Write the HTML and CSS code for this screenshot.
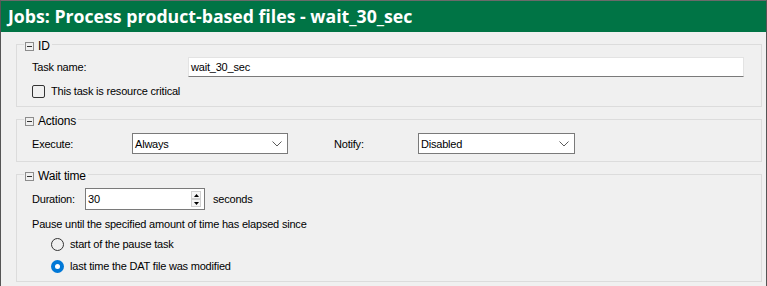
FILE: index.html
```html
<!DOCTYPE html>
<html>
    <head>
        <link rel="stylesheet" href="styles.css">
    </head>
    <body>
        <div class="window">
            <div class="titlebar">Jobs: Process product-based files - wait_30_sec</div>

            <div class="content">
                <div class="group">
                    <div class="group-title"><span class="collapse"></span>ID</div>
                    <div class="row row-input">
                        <span class="label label-task">Task name:</span>
                        <div class="textbox">wait_30_sec</div>
                    </div>
                    <div class="row row-check">
                        <span class="checkbox"></span>
                        <span>This task is resource critical</span>
                    </div>
                </div>

                <div class="group">
                    <div class="group-title"><span class="collapse"></span>Actions</div>
                    <div class="row row-combo">
                        <span class="label label-execute">Execute:</span>
                        <div class="combo combo-execute">
                            <span>Always</span>
                            <svg class="chevron" width="10" height="6" viewBox="0 0 10 6"><path d="M0.5 0.5 L5 5 L9.5 0.5" fill="none" stroke="#5a5a5a" stroke-width="1"/></svg>
                        </div>
                        <span class="label label-notify">Notify:</span>
                        <div class="combo combo-notify">
                            <span>Disabled</span>
                            <svg class="chevron" width="10" height="6" viewBox="0 0 10 6"><path d="M0.5 0.5 L5 5 L9.5 0.5" fill="none" stroke="#5a5a5a" stroke-width="1"/></svg>
                        </div>
                    </div>
                </div>

                <div class="group">
                    <div class="group-title"><span class="collapse"></span>Wait time</div>
                    <div class="row row-spin">
                        <span class="label label-duration">Duration:</span>
                        <div class="spinner">
                            <span class="spin-value">30</span>
                            <div class="spin-buttons">
                                <span class="spin-btn"><svg width="5" height="3" viewBox="0 0 5 3"><path d="M2.5 0 L5 3 L0 3 Z" fill="#000"/></svg></span>
                                <span class="spin-btn"><svg width="5" height="3" viewBox="0 0 5 3"><path d="M0 0 L5 0 L2.5 3 Z" fill="#000"/></svg></span>
                            </div>
                        </div>
                        <span class="unit">seconds</span>
                    </div>
                    <div class="row row-text">Pause until the specified amount of time has elapsed since</div>
                    <div class="row row-radio">
                        <span class="radio"></span>
                        <span>start of the pause task</span>
                    </div>
                    <div class="row row-radio row-radio-last">
                        <span class="radio checked"></span>
                        <span>last time the DAT file was modified</span>
                    </div>
                </div>
            </div>
        </div>
    </body>
</html>
```

FILE: styles.css
```css
body {
    margin: 0;
    background: #f0f0f0;
    font-family: 'Liberation Sans', Arial, sans-serif;
    font-size: 11px;
    letter-spacing: -0.2px;
    color: #000;
}

.window {
    width: 765px;
    height: 285px;
    border-top: 1px solid #6a6a6a;
    border-left: 1px solid #555;
    border-right: 1px solid #555;
    background: #f0f0f0;
    overflow: hidden;
}

.titlebar {
    height: 31px;
    background: #007445;
    color: #fff;
    font-family: 'Open Sans', sans-serif;
    font-weight: 700;
    font-size: 17.7px;
    letter-spacing: 0;
    line-height: 30px;
    padding-left: 7px;
}

.content {
    padding: 12px 4px 0 15px;
}

.group {
    border: 1px solid #dcdcdc;
    margin-bottom: 12px;
    padding-bottom: 7px;
}

.group-title {
    display: flex;
    align-items: center;
    width: fit-content;
    margin: -7px 0 0 7px;
    padding: 0 2px 0 1px;
    height: 15px;
    background: #f0f0f0;
    font-size: 12px;
}

.collapse {
    width: 7px;
    height: 7px;
    border: 1px solid #8c8c8c;
    margin-right: 4px;
    margin-top: 1px;
    display: flex;
    align-items: center;
    justify-content: center;
}

.collapse::after {
    content: "";
    width: 5px;
    height: 1px;
    background: #333;
}

.row {
    display: flex;
    align-items: center;
    padding-left: 15px;
}

.label {
    flex: none;
}

.row-input {
    margin-top: 4px;
    height: 20px;
    padding-right: 17px;
}

.label-task {
    width: 156px;
}

.textbox {
    flex: 1;
    height: 18px;
    line-height: 18px;
    background: #fff;
    border: 1px solid #e3e3e3;
    border-bottom-color: #7a7a7a;
    padding-left: 2px;
}

.row-check {
    margin-top: 6px;
    height: 16px;
}

.checkbox {
    width: 11px;
    height: 11px;
    border: 1px solid #333;
    border-radius: 2px;
    margin-right: 6px;
}

.row-combo {
    margin-top: 5px;
    height: 21px;
}

.label-execute {
    width: 100px;
}

.label-notify {
    width: 84px;
    margin-left: 46px;
}

.combo {
    box-sizing: border-box;
    height: 21px;
    background: #fff;
    border: 1px solid #7a7a7a;
    display: flex;
    align-items: center;
    justify-content: space-between;
    padding: 0 5px 0 2px;
}

.combo-execute {
    width: 156px;
}

.combo-notify {
    width: 157px;
}

.row-spin {
    margin-top: 5px;
    height: 22px;
}

.label-duration {
    width: 53px;
}

.spinner {
    box-sizing: border-box;
    width: 120px;
    height: 22px;
    background: #fff;
    border: 1px solid #7a7a7a;
    display: flex;
    align-items: center;
    justify-content: space-between;
    padding: 0 3px 0 2px;
}

.spin-buttons {
    display: flex;
    flex-direction: column;
}

.spin-btn {
    box-sizing: border-box;
    width: 10px;
    height: 8px;
    border: 1px solid #d0d0d0;
    background: #f5f5f5;
    display: flex;
    align-items: center;
    justify-content: center;
}

.unit {
    margin-left: 8px;
}

.row-text {
    margin-top: 6px;
    height: 15px;
}

.row-radio {
    margin-top: 5px;
    height: 16px;
    padding-left: 34px;
}

.row-radio-last {
    margin-top: 6px;
}

.radio {
    box-sizing: border-box;
    width: 13px;
    height: 13px;
    border: 1px solid #333;
    border-radius: 50%;
    margin-right: 6px;
    display: flex;
    align-items: center;
    justify-content: center;
}

.radio.checked {
    border: none;
    background: #0078d7;
}

.radio.checked::after {
    content: "";
    width: 5px;
    height: 5px;
    border-radius: 50%;
    background: #fff;
}
```
